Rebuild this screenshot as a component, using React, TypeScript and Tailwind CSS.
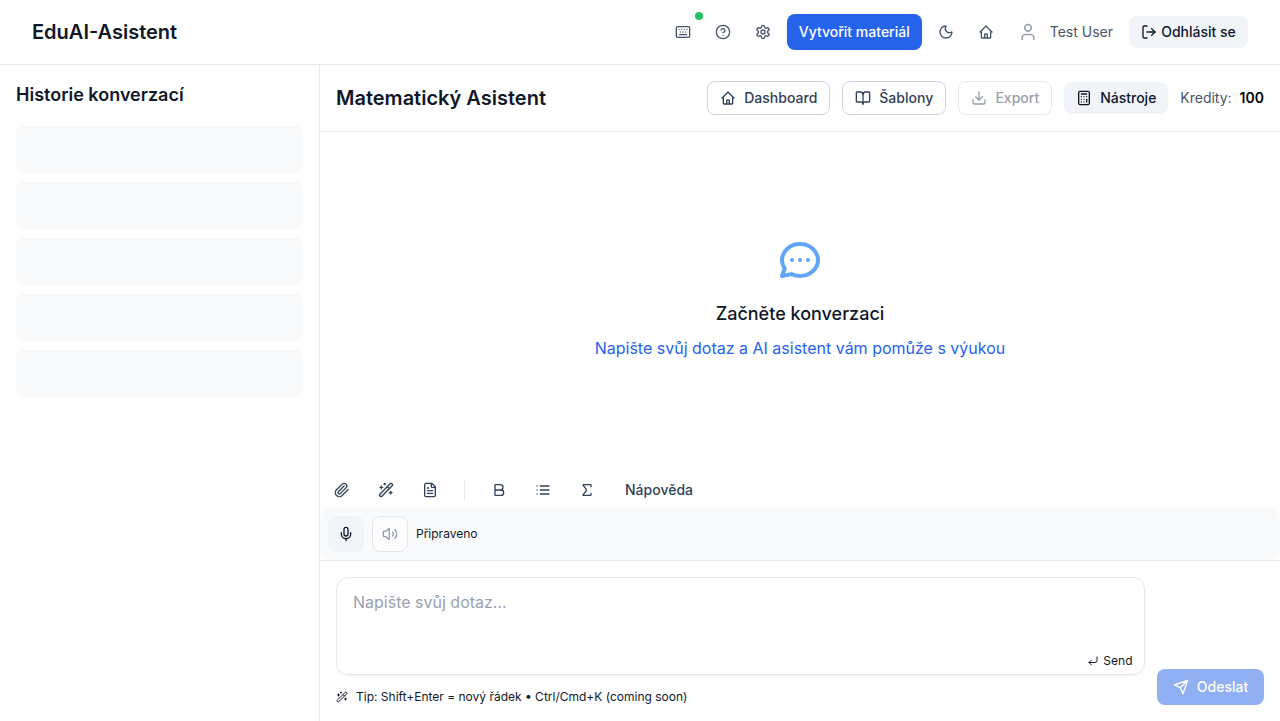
import type { ReactNode } from 'react';
import {
  Bold, BookOpen, Calculator, CircleHelp, CornerDownLeft, Download, FileText, Keyboard, LogOut,
  Mic, Moon, Sigma, User, Volume2, WandSparkles,
} from 'lucide-react';
import { HiOutlineChat, HiOutlineHome } from 'react-icons/hi';

function Glyph({ children }: { children: ReactNode }) {
  return (
    <svg className="size-4" viewBox="0 0 24 24" fill="none" stroke="currentColor" strokeWidth="2" strokeLinecap="round" strokeLinejoin="round">
      {children}
    </svg>
  );
}

function PaperclipIcon() {
  return <Glyph><path d="m21.44 11.05-9.19 9.19a6 6 0 0 1-8.49-8.49l8.57-8.57A4 4 0 1 1 18 8.84l-8.59 8.57a2 2 0 0 1-2.83-2.83l8.49-8.48" /></Glyph>;
}

function ListIcon() {
  return <Glyph><path d="M8 6h13M8 12h13M8 18h13M3 6h.01M3 12h.01M3 18h.01" /></Glyph>;
}

function SendIcon() {
  return <Glyph><path d="m22 2-7 20-4-9-9-4ZM22 2 11 13" /></Glyph>;
}

function SettingsIcon() {
  return (
    <Glyph>
      <path d="M12.22 2h-.44a2 2 0 0 0-2 2v.18a2 2 0 0 1-1 1.73l-.43.25a2 2 0 0 1-2 0l-.15-.08a2 2 0 0 0-2.73.73l-.22.38a2 2 0 0 0 .73 2.73l.15.1a2 2 0 0 1 1 1.72v.51a2 2 0 0 1-1 1.74l-.15.09a2 2 0 0 0-.73 2.73l.22.38a2 2 0 0 0 2.73.73l.15-.08a2 2 0 0 1 2 0l.43.25a2 2 0 0 1 1 1.73V20a2 2 0 0 0 2 2h.44a2 2 0 0 0 2-2v-.18a2 2 0 0 1 1-1.73l.43-.25a2 2 0 0 1 2 0l.15.08a2 2 0 0 0 2.73-.73l.22-.39a2 2 0 0 0-.73-2.73l-.15-.08a2 2 0 0 1-1-1.74v-.5a2 2 0 0 1 1-1.74l.15-.09a2 2 0 0 0 .73-2.73l-.22-.38a2 2 0 0 0-2.73-.73l-.15.08a2 2 0 0 1-2 0l-.43-.25a2 2 0 0 1-1-1.73V4a2 2 0 0 0-2-2z" />
      <circle cx="12" cy="12" r="3" />
    </Glyph>
  );
}

function IconButton({ children }: { children: ReactNode }) {
  return <button className="relative flex size-8 items-center justify-center rounded-md text-slate-600">{children}</button>;
}

function ToolButton({ children }: { children: ReactNode }) {
  return <button className="flex size-9 items-center justify-center rounded-md text-slate-700">{children}</button>;
}

function Header() {
  return (
    <header className="flex h-[65px] shrink-0 items-center justify-between border-b border-gray-200 px-8">
      <h1 className="text-xl font-semibold text-gray-900">EduAI-Asistent</h1>
      <div className="flex items-center gap-2">
        <IconButton>
          <Keyboard className="size-4" />
          <span className="absolute -top-1 -right-1 size-2 rounded-full bg-[#22c55e]" />
        </IconButton>
        <IconButton><CircleHelp className="size-4" /></IconButton>
        <IconButton><SettingsIcon /></IconButton>
        <button className="h-9 w-[135px] rounded-lg bg-[#2563eb] text-sm font-medium whitespace-nowrap text-white">Vytvořit materiál</button>
        <IconButton><Moon className="size-4" /></IconButton>
        <IconButton><HiOutlineHome className="size-4" /></IconButton>
        <div className="flex items-center pl-2">
          <User className="size-5 text-gray-400" />
          <span className="ml-3 text-sm text-gray-600">Test User</span>
          <button className="ml-4 flex h-8 w-[119px] items-center justify-center gap-1 rounded-lg bg-slate-100 text-sm font-medium whitespace-nowrap text-slate-900">
            <LogOut className="size-4" />
            Odhlásit se
          </button>
        </div>
      </div>
    </header>
  );
}

function Sidebar() {
  return (
    <aside className="w-80 shrink-0 border-r border-gray-200 p-4">
      <h2 className="mb-4 text-lg font-semibold text-gray-900">Historie konverzací</h2>
      <div className="flex flex-col gap-2">
        {[0, 1, 2, 3, 4].map((row) => <div key={row} className="h-12 rounded-lg bg-[#f9fafc]" />)}
      </div>
    </aside>
  );
}

function AssistantBar() {
  return (
    <div className="flex h-[67px] shrink-0 items-center justify-between border-b border-gray-200 px-4">
      <h2 className="text-xl font-semibold text-gray-900">Matematický Asistent</h2>
      <div className="flex items-center gap-3 text-sm font-medium">
        <button className="flex h-[34px] w-[123px] items-center justify-center gap-2 rounded-lg border border-slate-300 text-slate-700">
          <HiOutlineHome className="size-4" />Dashboard
        </button>
        <button className="flex h-[34px] w-[104px] items-center justify-center gap-2 rounded-lg border border-slate-300 text-slate-700">
          <BookOpen className="size-4" />Šablony
        </button>
        <button className="flex h-[34px] w-[94px] items-center justify-center gap-2 rounded-lg border border-slate-300 text-slate-700 opacity-50">
          <Download className="size-4" />Export
        </button>
        <button className="flex h-8 w-[104px] items-center justify-center gap-2 rounded-lg bg-slate-100 text-slate-900">
          <Calculator className="size-4" />Nástroje
        </button>
        <div className="flex gap-2 font-normal text-gray-600">Kredity: <span className="font-semibold text-black">100</span></div>
      </div>
    </div>
  );
}

function Conversation() {
  return (
    <section className="flex flex-1 flex-col items-center justify-center pb-2">
      <HiOutlineChat className="mb-4 size-12 text-[#60a5fa]" />
      <h3 className="mb-2 text-lg leading-7 font-medium text-gray-900">Začněte konverzaci</h3>
      <p className="text-base text-[#2563eb]">Napište svůj dotaz a AI asistent vám pomůže s výukou</p>
    </section>
  );
}

function Toolbar() {
  return (
    <div className="flex h-9 shrink-0 items-center gap-2 px-1">
      <ToolButton><PaperclipIcon /></ToolButton>
      <ToolButton><WandSparkles className="size-4" /></ToolButton>
      <ToolButton><FileText className="size-4" /></ToolButton>
      <div className="mx-2 h-5 w-px bg-gray-200" />
      <ToolButton><Bold className="size-4" /></ToolButton>
      <ToolButton><ListIcon /></ToolButton>
      <ToolButton><Sigma className="size-4" /></ToolButton>
      <button className="px-3 text-sm font-medium text-slate-700">Nápověda</button>
    </div>
  );
}

function VoiceBar() {
  return (
    <div className="flex h-[52px] shrink-0 items-center gap-2 rounded-xl bg-[#f9fafc] px-2">
      <button className="flex size-9 items-center justify-center rounded-lg bg-slate-100 text-slate-900"><Mic className="size-4" /></button>
      <button className="flex size-9 items-center justify-center rounded-lg border border-slate-300 bg-white text-slate-700 opacity-50"><Volume2 className="size-4" /></button>
      <span className="text-xs text-gray-900">Připraveno</span>
    </div>
  );
}

function Composer() {
  return (
    <div className="flex h-[161px] shrink-0 items-end gap-3 border-t border-gray-200 p-4">
      <div className="flex h-full flex-1 flex-col">
        <div className="flex h-[98px] shrink-0 flex-col justify-between rounded-xl border border-gray-200 shadow-xs">
          <div className="px-4 pt-3 text-base text-gray-400">Napište svůj dotaz...</div>
          <div className="flex items-center justify-end gap-1 pr-[11.5px] pb-[5px] text-xs text-gray-900">
            <CornerDownLeft className="size-3" />Send
          </div>
        </div>
        <div className="mt-[14px] flex items-center gap-2 text-xs text-gray-900">
          <WandSparkles className="size-3" />
          <span>Tip: Shift+Enter = nový řádek • Ctrl/Cmd+K (coming soon)</span>
        </div>
      </div>
      <button className="flex h-9 w-[107px] items-center justify-center gap-2 rounded-lg bg-[#2563eb] text-sm font-medium text-white opacity-50">
        <SendIcon />Odeslat
      </button>
    </div>
  );
}

export default function App() {
  return (
    <div className="flex h-screen flex-col overflow-hidden bg-white font-['Inter',sans-serif]">
      <Header />
      <div className="flex min-h-0 flex-1">
        <Sidebar />
        <main className="flex min-w-0 flex-1 flex-col">
          <AssistantBar />
          <Conversation />
          <Toolbar />
          <VoiceBar />
          <Composer />
        </main>
      </div>
    </div>
  );
}
